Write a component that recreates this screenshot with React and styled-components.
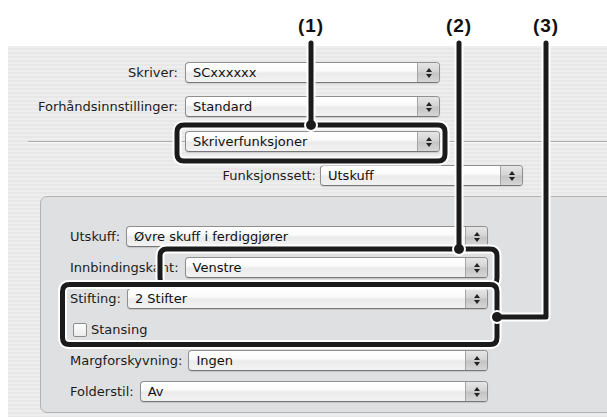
import React from "react";
import styled, { createGlobalStyle } from "styled-components";

const GlobalStyle = createGlobalStyle`
    html, body {
        margin: 0;
        padding: 0;
        background: #ffffff;
    }
    body {
        font-family: "DejaVu Sans", "Liberation Sans", sans-serif;
        color: #1c1c1c;
    }
`

const Page = styled.div`
    position: relative;
    width: 607px;
    height: 417px;
    overflow: hidden;
    box-sizing: border-box;
    padding: 46px 0 0 8px;
    background: #ffffff;
`

const Dialog = styled.div`
    height: 100%;
    display: flex;
    flex-direction: column;
    background: repeating-linear-gradient(#eeeeee 0 2px, #e7e7e7 2px 4px);
`

const TopForm = styled.div`
    display: grid;
    grid-template-columns: 170px 255px;
    column-gap: 7px;
    row-gap: 13px;
    align-items: center;
    padding-top: 16px;
`

const Label = styled.span`
    font-size: 13px;
    white-space: nowrap;
    text-align: ${props => props.$right ? "right" : "left"};
    width: ${props => props.$w ? props.$w + "px" : "auto"};
    flex: none;
`

const SeparatorRow = styled.div`
    display: flex;
    margin: 14px 0 0 20px;
    padding-left: 157px;
    background: linear-gradient(transparent 10px, #ababab 10px, #ababab 11px, #f8f8f8 11px, #f8f8f8 12px, transparent 12px);
`

const SetRow = styled.div`
    display: flex;
    align-items: center;
    gap: 4px;
    margin-top: 13px;
`

const GroupBox = styled.div`
    flex: 1;
    margin: 10px -12px 4px 32px;
    border: 1px solid #b3b3b3;
    border-radius: 7px;
    background: #dfe0e2;
    padding: 29px 0 0 29px;
    display: flex;
    flex-direction: column;
    gap: 10px;
`

const Row = styled.div`
    display: flex;
    align-items: center;
    gap: 6px;
    width: 418px;
    height: 21px;
`

const Popup = styled.div`
    display: flex;
    align-items: center;
    box-sizing: border-box;
    height: 21px;
    width: ${props => props.$w ? props.$w + "px" : "auto"};
    flex: ${props => props.$w ? "none" : "1"};
    border: 1px solid #8f8f8f;
    border-bottom-color: #777777;
    border-radius: 4px;
    background: linear-gradient(#ffffff 0%, #fbfbfb 40%, #ebebeb 55%, #f3f3f3 100%);
    box-shadow: 0 1px 1px rgba(0, 0, 0, 0.12);
    font-size: 13px;
    color: #111111;
    overflow: hidden;
`

const PopupText = styled.span`
    flex: 1;
    padding-left: 7px;
    white-space: nowrap;
`

const Stepper = styled.div`
    width: 21px;
    height: 100%;
    border-left: 1px solid #a5a5a5;
    background: linear-gradient(#e6e6e6 0%, #d3d3d3 48%, #c3c3c3 52%, #d6d6d6 100%);
    display: flex;
    flex-direction: column;
    align-items: center;
    justify-content: center;
    gap: 2px;
`

const Arrow = styled.i`
    display: block;
    width: 0;
    height: 0;
    border-left: 3px solid transparent;
    border-right: 3px solid transparent;
    ${props => props.$down
        ? "border-top: 4px solid #222;"
        : "border-bottom: 4px solid #222;"}
`

const CheckRow = styled.label`
    display: flex;
    align-items: center;
    gap: 4px;
    height: 21px;
    padding-left: 3px;
    font-size: 13px;
`

const Checkbox = styled.span`
    width: 14px;
    height: 14px;
    box-sizing: border-box;
    border: 1px solid #8c8c8c;
    border-radius: 2px;
    background: linear-gradient(#ffffff, #ececec);
`

const Overlay = styled.svg`
    position: absolute;
    left: 0;
    top: 0;
    pointer-events: none;
`

const Callout = styled.span`
    position: absolute;
    top: 15px;
    left: ${props => props.$x}px;
    transform: translateX(-50%);
    font-family: "Liberation Sans", Arial, sans-serif;
    font-weight: bold;
    font-size: 19px;
    line-height: 21px;
    letter-spacing: 1px;
    color: #111111;
`

const Select = ({ value, w }) => (
    <Popup $w={w}>
        <PopupText>{value}</PopupText>
        <Stepper>
            <Arrow />
            <Arrow $down />
        </Stepper>
    </Popup>
)

const Leader = ({ d, dot }) => (
    <g fill="none" strokeLinejoin="round" strokeLinecap="round">
        <path d={d} stroke="#ffffff" strokeWidth="9" />
        {dot && <circle cx={dot[0]} cy={dot[1]} r="7" fill="#ffffff" />}
        <path d={d} stroke="#1b1b1b" strokeWidth="5" />
        {dot && <circle cx={dot[0]} cy={dot[1]} r="5" fill="#1b1b1b" />}
    </g>
)

const boxPath = (x, y, w, h, r) =>
    `M${x + r} ${y} H${x + w - r} Q${x + w} ${y} ${x + w} ${y + r} V${y + h - r} Q${x + w} ${y + h} ${x + w - r} ${y + h} H${x + r} Q${x} ${y + h} ${x} ${y + h - r} V${y + r} Q${x} ${y} ${x + r} ${y} Z`

const App = () => {
    return (
        <Page>
            <GlobalStyle />
            <Dialog>
                <TopForm>
                    <Label $right>Skriver:</Label>
                    <Select value="SCxxxxxx" />
                    <Label $right>Forhåndsinnstillinger:</Label>
                    <Select value="Standard" />
                </TopForm>
                <SeparatorRow>
                    <Select value="Skriverfunksjoner" w={255} />
                </SeparatorRow>
                <SetRow>
                    <Label $right $w={308}>Funksjonssett:</Label>
                    <Select value="Utskuff" w={203} />
                </SetRow>
                <GroupBox>
                    <Row>
                        <Label>Utskuff:</Label>
                        <Select value="Øvre skuff i ferdiggjører" />
                    </Row>
                    <Row>
                        <Label>Innbindingskant:</Label>
                        <Select value="Venstre" />
                    </Row>
                    <Row>
                        <Label>Stifting:</Label>
                        <Select value="2 Stifter" />
                    </Row>
                    <CheckRow>
                        <Checkbox />
                        Stansing
                    </CheckRow>
                    <Row>
                        <Label>Margforskyvning:</Label>
                        <Select value="Ingen" />
                    </Row>
                    <Row>
                        <Label>Folderstil:</Label>
                        <Select value="Av" />
                    </Row>
                </GroupBox>
            </Dialog>

            <Callout $x={311}>(1)</Callout>
            <Callout $x={459}>(2)</Callout>
            <Callout $x={546}>(3)</Callout>
            <Overlay width="607" height="417" viewBox="0 0 607 417">
                <Leader d={boxPath(177, 125, 268, 36, 7)} />
                <Leader d="M311 43 V125" dot={[311, 125]} />
                <Leader d={boxPath(160, 249, 337, 36, 7)} />
                <Leader d="M459 43 V249" dot={[459, 249]} />
                <Leader d={boxPath(62.5, 284.5, 434.5, 60, 7)} />
                <Leader d="M546 43 V317 H497" dot={[497, 317]} />
            </Overlay>
        </Page>
    )
}

export default App
